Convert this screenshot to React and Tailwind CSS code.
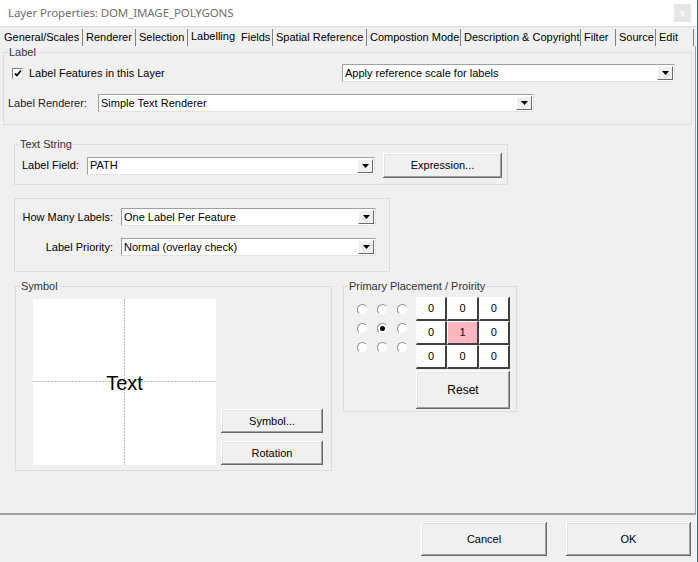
const tabs = [
  { label: "General/Scales", w: "w-[82px]" },
  { label: "Renderer", w: "w-[53px]" },
  { label: "Selection", w: "w-[52px]" },
  { label: "Labelling", w: "w-[50px]", active: true },
  { label: "Fields", w: "w-[35px]" },
  { label: "Spatial Reference", w: "w-[94px]" },
  { label: "Compostion Mode", w: "w-[94px]" },
  { label: "Description & Copyright", w: "w-[120px]" },
  { label: "Filter", w: "w-[35px]" },
  { label: "Source", w: "w-[40px]" },
  { label: "Edit", w: "w-[38px]" },
]

function Arrow() {
  return (
    <div className="h-[14px] w-[16px] mr-[1px] flex items-center justify-center bg-[#f0f0f0] border border-t-white border-l-white border-r-[#696969] border-b-[#696969]">
      <svg width="7" height="4" viewBox="0 0 7 4">
        <path d="M0 0h7L3.5 4z" fill="#000" />
      </svg>
    </div>
  )
}

function Combo({ w, value }) {
  return (
    <div className={`${w} h-[18px] bg-white flex items-center justify-between border border-t-[#a0a0a0] border-l-[#a0a0a0] border-r-[#e3e3e3] border-b-[#e3e3e3]`}>
      <span className="pl-[2px] leading-none whitespace-nowrap">{value}</span>
      <Arrow />
    </div>
  )
}

function Button({ w, h, children }) {
  return (
    <div className={`${w} ${h} flex items-center justify-center bg-[#f0f0f0] shadow-[inset_-1px_-1px_0_#696969,inset_1px_1px_0_#fff,inset_-2px_-2px_0_#a0a0a0,inset_2px_2px_0_#e3e3e3]`}>
      {children}
    </div>
  )
}

function Group({ legend, className, children }) {
  return (
    <div className={`relative border border-[#dcdcdc] ${className}`}>
      {legend && (
        <span className="absolute left-[4px] -top-[8px] px-[1px] bg-[#f0f0f0] leading-[14px] text-[#333] whitespace-nowrap">
          {legend}
        </span>
      )}
      {children}
    </div>
  )
}

function Radio({ checked }) {
  return (
    <div className="w-[11px] h-[11px] rounded-full bg-white flex items-center justify-center border border-t-[#909090] border-l-[#909090] border-r-[#f0f0f0] border-b-[#f0f0f0]">
      {checked && <div className="w-[5px] h-[5px] rounded-full bg-black" />}
    </div>
  )
}

export default function App() {
  const cells = [0, 0, 0, 0, 1, 0, 0, 0, 0]

  return (
    <div className="w-[698px] h-[562px] overflow-hidden bg-[#f0f0f0] flex flex-col font-['Liberation_Sans',Arial,sans-serif] text-[11px] text-black border-r border-[#2a7ab0]">
      {/* title bar */}
      <div className="h-[26px] shrink-0 bg-white flex items-center justify-between pl-[8px] pr-[6px]">
        <span className="font-['Noto_Sans',sans-serif] text-[11.5px] tracking-[-0.1px] text-[#707070] leading-none">
          Layer Properties: DOM_IMAGE_POLYGONS
        </span>
        <div className="w-[17px] h-[18px] bg-[#e6e6e6] flex items-center justify-center text-[11px] text-white leading-none">
          x
        </div>
      </div>

      {/* tabs */}
      <div className="h-[20px] shrink-0 flex items-end pl-[1px] border-t border-[#dadada]">
        {tabs.map((t) => (
          <div
            key={t.label}
            className={`${t.w} flex items-center pl-[3px] whitespace-nowrap ${
              t.active
                ? "h-[20px] items-start pt-[2px] pl-[2px]"
                : "h-[17px] border-r border-[#808080]"
            }`}
          >
            {t.label}
          </div>
        ))}
      </div>

      {/* page */}
      <div className="h-[469px] shrink-0 flex flex-col border-b-2 border-r border-[#a0a0a0] mr-[1px]">
        <Group legend="Label" className="mx-[3px] mt-[6px] h-[73px]">
          <div className="flex items-center mt-[11px] h-[18px]">
            <div className="ml-[8px] w-[11px] h-[11px] bg-white flex items-center justify-center border border-t-[#808080] border-l-[#808080] border-r-[#e3e3e3] border-b-[#e3e3e3]">
              <svg width="8" height="7" viewBox="0 0 8 7">
                <path d="M1 3.5l2 2 4-5" stroke="#000" strokeWidth="1.8" fill="none" />
              </svg>
            </div>
            <span className="ml-[6px]">Label Features in this Layer</span>
            <div className="ml-auto mr-[16px]">
              <Combo w="w-[333px]" value="Apply reference scale for labels" />
            </div>
          </div>
          <div className="flex items-center mt-[12px] h-[18px]">
            <span className="ml-[4px] w-[90px] text-[#222]">Label Renderer:</span>
            <Combo w="w-[436px]" value="Simple Text Renderer" />
          </div>
        </Group>

        <Group legend="Text String" className="ml-[14px] mt-[19px] w-[494px] h-[41px]">
          <div className="flex items-center mt-[8px]">
            <span className="ml-[7px] w-[65px]">Label Field:</span>
            <Combo w="w-[288px]" value="PATH" />
            <div className="ml-[8px]">
              <Button w="w-[119px]" h="h-[25px]">Expression...</Button>
            </div>
          </div>
        </Group>

        <Group className="ml-[14px] mt-[13px] w-[376px] h-[74px]">
          <div className="flex items-center mt-[9px]">
            <span className="w-[98px] text-right whitespace-nowrap">How Many Labels:</span>
            <div className="ml-[8px]">
              <Combo w="w-[255px]" value="One Label Per Feature" />
            </div>
          </div>
          <div className="flex items-center mt-[12px]">
            <span className="w-[98px] text-right whitespace-nowrap">Label Priority:</span>
            <div className="ml-[8px]">
              <Combo w="w-[255px]" value="Normal (overlay check)" />
            </div>
          </div>
        </Group>

        <div className="flex mt-[14px]">
          <Group legend="Symbol" className="ml-[15px] w-[317px] h-[185px]">
            <div className="flex mt-[12px] ml-[17px]">
              <div className="relative w-[183px] h-[166px] bg-white flex items-center justify-center">
                <svg className="absolute inset-0" width="183" height="166">
                  <line x1="0" y1="82.5" x2="183" y2="82.5" stroke="#b8b8b8" strokeDasharray="2 1" />
                  <line x1="91.5" y1="0" x2="91.5" y2="166" stroke="#b8b8b8" strokeDasharray="2 1" />
                </svg>
                <span className="relative text-[20px] leading-none mt-[1px]">Text</span>
              </div>
              <div className="flex flex-col justify-end ml-[5px] gap-[8px]">
                <Button w="w-[102px]" h="h-[24px]">Symbol...</Button>
                <Button w="w-[102px]" h="h-[24px]">Rotation</Button>
              </div>
            </div>
          </Group>

          <Group legend="Primary Placement / Proirity" className="ml-[11px] w-[174px] h-[126px]">
            <div className="flex mt-[10px]">
              <div className="grid grid-cols-3 gap-x-[9px] gap-y-[8px] ml-[13px] mt-[7px] h-fit">
                {cells.map((c, i) => (
                  <Radio key={i} checked={i === 4} />
                ))}
              </div>
              <div className="ml-[8px] flex flex-col">
                <div className="grid grid-cols-3 w-[94px]">
                  {cells.map((c, i) => (
                    <div
                      key={i}
                      className={`h-[24px] flex items-center justify-center border-t border-l border-b-2 border-r-2 border-t-white border-l-white border-b-[#404040] border-r-[#404040] ${
                        c ? "bg-[#ffb6c1]" : "bg-white"
                      }`}
                    >
                      {c}
                    </div>
                  ))}
                </div>
                <div className="mt-[2px]">
                  <Button w="w-[94px]" h="h-[38px]">
                    <span className="text-[12px]">Reset</span>
                  </Button>
                </div>
              </div>
            </div>
          </Group>
        </div>
      </div>

      {/* footer */}
      <div className="flex-1 flex items-start pt-[7px] pl-[421px] gap-[19px]">
        <Button w="w-[126px]" h="h-[34px]">Cancel</Button>
        <Button w="w-[125px]" h="h-[34px]">OK</Button>
      </div>
    </div>
  )
}
